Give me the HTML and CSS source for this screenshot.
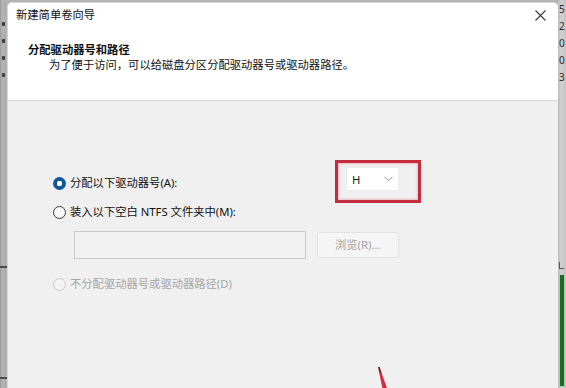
FILE: index.html
```html
<!DOCTYPE html>
<html lang="zh-CN">
<head>
<meta charset="utf-8">
<title>新建简单卷向导</title>
<link rel="stylesheet" href="styles.css">
</head>
<body>
<div class="screen">
  <div class="strip-left">
    <span class="dot"></span><span class="dot"></span><span class="dot"></span><span class="dot"></span>
    <span class="mark mark-a"></span>
    <span class="mark mark-b"></span>
  </div>
  <div class="dialog">
    <div class="header">
      <div class="titlebar">
        <span class="title">新建简单卷向导</span>
        <svg class="close" width="11" height="11" viewBox="0 0 11 11"><path d="M0.5 0.5 L10.5 10.5 M10.5 0.5 L0.5 10.5" stroke="#3a3a3a" stroke-width="1.1" fill="none"/></svg>
      </div>
      <div class="heading">分配驱动器号和路径</div>
      <div class="subheading">为了便于访问，可以给磁盘分区分配驱动器号或驱动器路径。</div>
    </div>
    <div class="body">
      <div class="row row-first">
        <label class="option">
          <span class="radio radio-on"></span>
          <span class="label">分配以下驱动器号(A):</span>
        </label>
        <div class="highlight">
          <div class="select">
            <span class="select-value">H</span>
            <svg class="chevron" width="9" height="6" viewBox="0 0 9 6"><path d="M0.5 0.8 L4.5 4.8 L8.5 0.8" stroke="#8a8a8a" stroke-width="1" fill="none"/></svg>
          </div>
        </div>
      </div>
      <label class="option row-second">
        <span class="radio"></span>
        <span class="label">装入以下空白 NTFS 文件夹中(M):</span>
      </label>
      <div class="path-row">
        <div class="textbox"></div>
        <div class="button">浏览(R)...</div>
      </div>
      <label class="option option-disabled">
        <span class="radio radio-disabled"></span>
        <span class="label">不分配驱动器号或驱动器路径(D)</span>
      </label>
    </div>
  </div>
  <div class="strip-right">
    <div class="peek">
      <span>5</span><span>2</span><span>0</span><span>0</span><span>3</span>
    </div>
    <span class="corner"></span>
    <span class="bar"></span>
  </div>
  <svg class="arrow" width="20" height="26" viewBox="0 0 20 26">
    <polygon points="5,2 6.5,2 15,26 10,26" fill="#d42a40"/>
    <polygon points="5,2 6.5,2 8.5,8 7.2,8" fill="#6a1f2a"/>
  </svg>
</div>
</body>
</html>
```
FILE: styles.css
```css
html, body {
  margin: 0;
  padding: 0;
}
body {
  width: 566px;
  height: 388px;
  overflow: hidden;
  background: #f0f0f0;
  font-family: "Noto Sans", "Noto Sans CJK SC", sans-serif;
  font-size: 11.3px;
  color: #111111;
}
.screen {
  position: relative;
  display: flex;
  width: 566px;
  height: 388px;
  background: #b4b4b4;
}
.strip-left {
  position: relative;
  width: 7px;
  flex: none;
  display: flex;
  flex-direction: column;
  align-items: center;
  padding-top: 22px;
  gap: 13px;
  box-sizing: border-box;
  background: linear-gradient(to right, #9c9c9c 0, #b8b8b8 3px, #a6a6a6 6px, #c8c8c8 7px);
}
.dot {
  width: 3px;
  height: 4px;
  background: #3c3c3c;
  border-radius: 1px;
}
.mark {
  position: absolute;
  left: 0;
  width: 7px;
  height: 2px;
  background: #4a4a4a;
}
.mark-a { top: 266px; }
.mark-b { top: 377px; }

.dialog {
  flex: 1;
  margin-top: 2px;
  display: flex;
  flex-direction: column;
  background: #f0f0f0;
  border-top-left-radius: 5px;
  border-top-right-radius: 5px;
  border-left: 1px solid #d6d6d6;
  border-top: 1px solid #d8d8d8;
  overflow: hidden;
}
.header {
  height: 98px;
  background: #ffffff;
  border-bottom: 1px solid #d9d9d9;
  box-sizing: border-box;
  flex: none;
}
.titlebar {
  display: flex;
  align-items: center;
  justify-content: space-between;
  height: 24px;
  padding: 0 12px 0 8px;
}
.title {
  line-height: 14px;
}
.close {
  display: block;
}
.heading {
  margin-top: 16px;
  padding-left: 20px;
  font-weight: bold;
  line-height: 14px;
}
.subheading {
  margin-top: 1px;
  padding-left: 41px;
  line-height: 14px;
}
.body {
  flex: 1;
  padding: 59px 0 0 45px;
  display: flex;
  flex-direction: column;
}
.row {
  display: flex;
  align-items: center;
}
.option {
  display: flex;
  align-items: center;
  height: 14px;
  gap: 4px;
}
.row-first .option {
  width: 282px;
  margin-top: 3px;
}
.row-second {
  margin-top: 2px;
}
.radio {
  width: 11px;
  height: 11px;
  border: 1px solid #3d3d3d;
  border-radius: 50%;
  box-sizing: content-box;
  background: #f7f7f7;
  flex: none;
}
.radio-on {
  width: 13px;
  height: 13px;
  border: none;
  background: radial-gradient(circle, #ffffff 0 2.5px, #0f5a9c 3px);
}
.radio-disabled {
  border-color: #c9c9c9;
  background: #f3f3f3;
}
.label {
  line-height: 14px;
  white-space: nowrap;
}
.option-disabled {
  margin-top: 18px;
  color: #a4a4a4;
}
.highlight {
  width: 86px;
  height: 43px;
  box-sizing: border-box;
  border: 3px solid #c32b3e;
  box-shadow: inset 0 0 2px 1px rgba(235, 150, 160, 0.6);
  padding: 4px 0 0 8px;
}
.select {
  width: 53px;
  height: 24px;
  box-sizing: border-box;
  background: #ffffff;
  border: 1px solid #ececec;
  display: flex;
  align-items: center;
  justify-content: space-between;
  padding: 0 5px 0 5px;
}
.select-value {
  color: #1a1a1a;
}
.chevron {
  display: block;
}
.path-row {
  display: flex;
  align-items: center;
  gap: 11px;
  margin-top: 12px;
  padding-left: 21px;
}
.textbox {
  width: 232px;
  height: 28px;
  box-sizing: border-box;
  border: 1px solid #c9c9c9;
  background: #f2f2f2;
}
.button {
  width: 82px;
  height: 26px;
  box-sizing: border-box;
  border: 1px solid #e2e2e2;
  border-radius: 3px;
  background: #f5f5f5;
  color: #a2a2a2;
  display: flex;
  align-items: center;
  padding-left: 17px;
  line-height: 14px;
}

.strip-right {
  position: relative;
  width: 8px;
  flex: none;
  background: linear-gradient(to right, #bcbcbc 0, #d0d0d0 3px, #c4c4c4 8px);
  overflow: hidden;
}
.peek {
  display: flex;
  flex-direction: column;
  padding-left: 1px;
  padding-top: 1px;
  font-size: 10px;
  line-height: 17px;
  color: #2a2a2a;
}
.corner {
  position: absolute;
  left: 1px;
  top: 262px;
  width: 4px;
  height: 6px;
  border-left: 1px solid #555;
  border-bottom: 1px solid #555;
}
.bar {
  position: absolute;
  left: 1px;
  top: 275px;
  width: 6px;
  height: 112px;
  box-sizing: border-box;
  background: #1e6a22;
  border: 1px solid #9ad69c;
  border-top: none;
}
.arrow {
  position: absolute;
  left: 373px;
  top: 365px;
}
```
